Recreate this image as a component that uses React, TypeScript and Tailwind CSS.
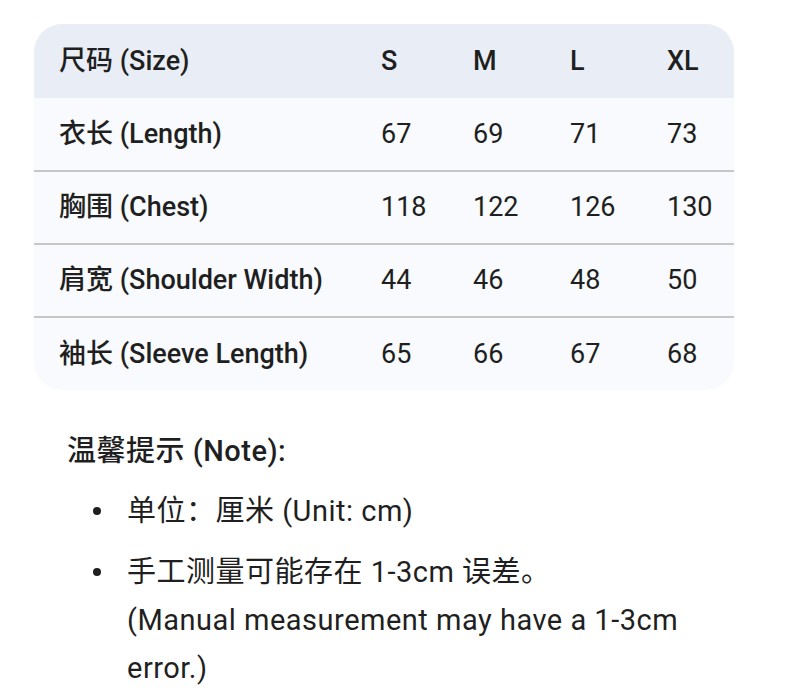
const header = ["S", "M", "L", "XL"];

const rows: { label: string; values: string[] }[] = [
  { label: "衣长 (Length)", values: ["67", "69", "71", "73"] },
  { label: "胸围 (Chest)", values: ["118", "122", "126", "130"] },
  { label: "肩宽 (Shoulder Width)", values: ["44", "46", "48", "50"] },
  { label: "袖长 (Sleeve Length)", values: ["65", "66", "67", "68"] },
];

const notes = [
  "单位：厘米 (Unit: cm)",
  "手工测量可能存在 1-3cm 误差。\n(Manual measurement may have a 1-3cm error.)",
];

export default function App() {
  return (
    <div
      className="w-[800px] h-[695px] bg-white text-[#1f1f1f] overflow-hidden"
      style={{ fontFamily: 'Roboto, "Noto Sans CJK SC", sans-serif' }}
    >
      {/* Size table */}
      <div className="ml-[34px] mt-[24px] w-[700px] rounded-[28px] overflow-hidden bg-[#f8fafd]">
        <table className="w-full border-collapse text-[27px]">
          <thead>
            <tr className="bg-[#e9eef6] h-[74px] text-left">
              <th className="pl-[25px] w-[323px] font-medium">尺码 (Size)</th>
              {header.map((h, i) => (
                <th
                  key={h}
                  className={`pl-[24px] font-medium ${i === 0 ? "w-[92px]" : i === 3 ? "w-[91px]" : "w-[97px]"}`}
                >
                  {h}
                </th>
              ))}
            </tr>
          </thead>
          <tbody>
            {rows.map((r, idx) => (
              <tr
                key={r.label}
                className={`h-[73px] ${idx > 0 ? "border-t-2 border-[#c7c7c7]" : ""}`}
              >
                <td className="pl-[25px] font-medium">{r.label}</td>
                {r.values.map((v, i) => (
                  <td key={i} className="pl-[24px]">
                    {v}
                  </td>
                ))}
              </tr>
            ))}
          </tbody>
        </table>
      </div>

      {/* Notes */}
      <div className="pl-[67px] pt-[37px] text-[29px] tracking-[0.5px]">
        <p className="font-medium leading-[48px]">温馨提示 (Note):</p>
        <ul className="mt-[12px] space-y-[13px]">
          {notes.map((n) => (
            <li key={n} className="flex">
              <span className="w-[60px] h-[48px] flex items-center">
                <span className="ml-[26px] w-[8px] h-[8px] rounded-full bg-[#1f1f1f]" />
              </span>
              <span className="w-[580px] leading-[48px] whitespace-pre-line">{n}</span>
            </li>
          ))}
        </ul>
      </div>
    </div>
  );
}
